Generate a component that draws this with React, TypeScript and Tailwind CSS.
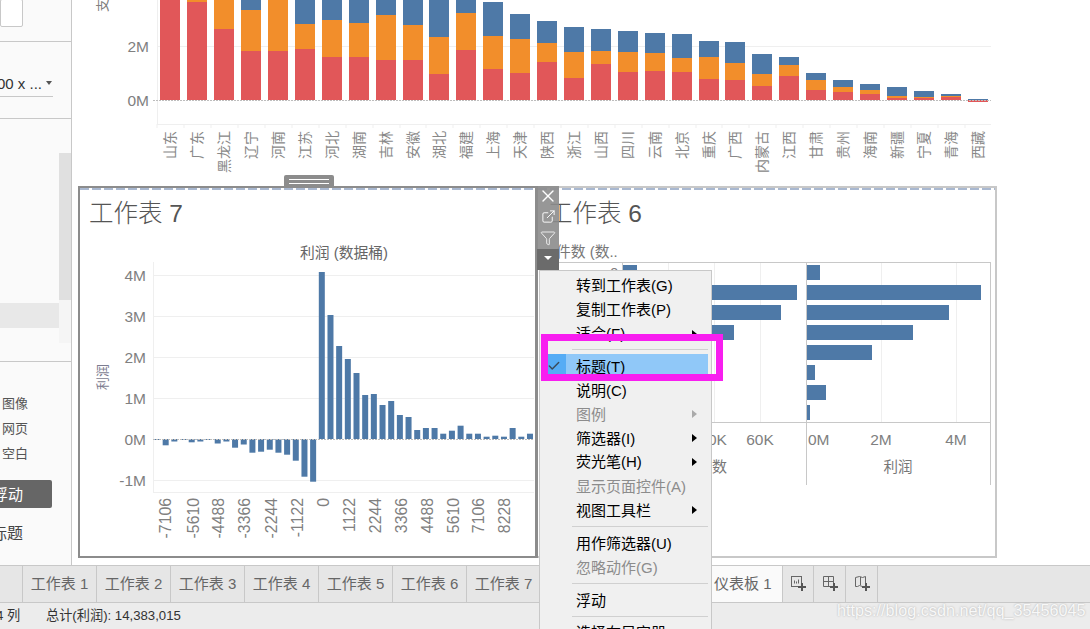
import { X, ExternalLink, Filter, Check } from "lucide-react";

// red top, orange top, blue top (page y, baseline is y=100)
const PROVINCES: [string, number, number, number, number][] = [
  ["山东", 160, -30, -60, -90],
  ["广东", 187, 2, -20, -60],
  ["黑龙江", 214, 29, -10, -50],
  ["辽宁", 241, 51, 10, -30],
  ["河南", 268, 51, -5, -30],
  ["江苏", 295, 49, 24, -20],
  ["河北", 322, 57, 20, -20],
  ["湖南", 349, 57, 23, 0],
  ["吉林", 376, 60, 15, -20],
  ["安徽", 403, 60, 25, -20],
  ["湖北", 429, 74, 37, -20],
  ["福建", 456, 50, 13, -20],
  ["上海", 483, 69, 36, 2],
  ["天津", 510, 73, 39, 14],
  ["陕西", 537, 62, 43, 21],
  ["浙江", 564, 78, 52, 27],
  ["山西", 591, 64, 51, 29],
  ["四川", 618, 72, 52, 31],
  ["云南", 645, 71, 53, 33],
  ["北京", 672, 72, 58, 34],
  ["重庆", 699, 79, 57, 41],
  ["广西", 725, 80, 63, 42],
  ["内蒙古", 752, 86, 74, 54],
  ["江西", 779, 76, 65, 57],
  ["甘肃", 806, 90, 80, 73],
  ["贵州", 833, 92, 87, 80],
  ["海南", 860, 94, 90, 84],
  ["新疆", 887, 98, 96, 87],
  ["宁夏", 914, 98, 97, 91],
  ["青海", 941, 97, 96, 94],
  ["西藏", 968, 100, 100, 99],
];

// bar ends relative to the 0M line, positive goes up
const BUCKETS = [
  -1, -6.3, -2.5, -1, -3.3, -2.5, -1, -4.5, -2.5, -8.7, -5.5, -13.7, -12.7, -10.7, -13.7, -15.7, -21.7, -37.7, -42.7,
  167, 124, 93, 80, 66, 44, 45, 34, 38, 24, 22, 9, 11, 11, 5.3, 8.3, 13.3, 5.3, 5.3, 2.3, 3.3, 2.3, 11, 2.3, 5.3,
];

const BUCKET_LABELS: [string, number][] = [
  ["-7106", 165], ["-5610", 193], ["-4488", 218], ["-3366", 244], ["-2244", 271], ["-1122", 297], ["0", 323],
  ["1122", 349], ["2244", 375], ["3366", 401], ["4488", 427], ["5610", 453], ["7106", 478], ["8228", 504],
];

const LEFT_BARS: [number, number][] = [[265, 637], [285, 797], [305, 781], [325, 734]];
const RIGHT_BARS: [number, number][] = [[265, 820], [285, 981], [305, 949], [325, 913], [345, 872], [365, 815], [385, 826], [405, 810]];

const TABS = ["工作表 1", "工作表 2", "工作表 3", "工作表 4", "工作表 5", "工作表 6", "工作表 7"];

type MenuRow = { label?: string; arrow?: boolean; off?: boolean; sepH?: number; sepAt?: number; on?: boolean; low?: boolean };

const MENU: MenuRow[] = [
  { label: "转到工作表(G)" },
  { label: "复制工作表(P)" },
  { label: "适合(F)", arrow: true },
  { sepH: 8, sepAt: 3 },
  { label: "标题(T)", on: true, low: true },
  { label: "说明(C)", low: true },
  { label: "图例", off: true, arrow: true, low: true },
  { label: "筛选器(I)", arrow: true, low: true },
  { label: "荧光笔(H)", arrow: true },
  { label: "显示页面控件(A)", off: true, low: true },
  { label: "视图工具栏", arrow: true, low: true },
  { sepH: 10, sepAt: 4 },
  { label: "用作筛选器(U)" },
  { label: "忽略动作(G)", off: true },
  { sepH: 9, sepAt: 3 },
  { label: "浮动" },
  { sepH: 8, sepAt: 3 },
  { label: "选择布局容器" },
];

function TopChart() {
  return (
    <svg width={1018} height={186} viewBox="72 0 1018 186" className="block shrink-0">
      <line x1={157} y1={46.5} x2={991} y2={46.5} stroke="#efefef" />
      <line x1={157.5} y1={0} x2={157.5} y2={124} stroke="#efefef" />
      <line x1={157} y1={124.5} x2={991} y2={124.5} stroke="#efefef" />
      <text x={149} y={51.5} textAnchor="end" fontSize={15.5} fill="#808080">2M</text>
      <text x={149} y={105.5} textAnchor="end" fontSize={15.5} fill="#808080">0M</text>
      <text transform="translate(107 12) rotate(-90)" fontSize={13} fill="#808080">支</text>
      {PROVINCES.map(([name, x, red, orange, blue]) => (
        <g key={name}>
          <rect x={x} y={blue} width={20} height={orange - blue} fill="#4e79a7" />
          <rect x={x} y={orange} width={20} height={red - orange} fill="#f28e2b" />
          <rect x={x} y={red} width={20} height={Math.max(100 - red, 2)} fill="#e15759" />
          <line x1={x - 3} y1={124} x2={x - 3} y2={128} stroke="#efefef" />
          <text transform={`translate(${x + 14.5} 131) rotate(-90)`} textAnchor="end" fontSize={14} fill="#888">{name}</text>
        </g>
      ))}
      <line x1={153} y1={100.5} x2={991} y2={100.5} stroke="#bdbdbd" strokeDasharray="2 1" />
    </svg>
  );
}

function Sheet7Chart() {
  return (
    <svg width={456} height={320} viewBox="80 236 456 320" className="block">
      <text x={344} y={258} textAnchor="middle" fontSize={14.8} fill="#666">利润 (数据桶)</text>
      <line x1={153.5} y1={262} x2={153.5} y2={492} stroke="#efefef" />
      <line x1={153} y1={492.5} x2={534} y2={492.5} stroke="#efefef" />
      {[["4M", 275], ["3M", 316], ["2M", 357], ["1M", 398], ["-1M", 480]].map(([t, y]) => (
        <g key={t}>
          <line x1={153} y1={Number(y) + 0.5} x2={534} y2={Number(y) + 0.5} stroke="#efefef" />
          <text x={146} y={Number(y) + 6} textAnchor="end" fontSize={15.5} fill="#808080">{t}</text>
        </g>
      ))}
      <text x={146} y={445} textAnchor="end" fontSize={15.5} fill="#808080">0M</text>
      <text transform="translate(107 390) rotate(-90)" fontSize={13} fill="#7c7c90">利润</text>
      {BUCKETS.map((v, i) => (
        <rect key={i} x={154 + i * 8.674} y={v > 0 ? 439 - v : 439} width={6} height={Math.abs(v)} fill="#4e79a7" />
      ))}
      <line x1={153} y1={439.5} x2={534} y2={439.5} stroke="#bdbdbd" strokeDasharray="2 1" />
      {BUCKET_LABELS.map(([t, x]) => (
        <text key={t} transform={`translate(${x + 5.5} 498) rotate(-90)`} textAnchor="end" fontSize={15.8} fill="#808080">{t}</text>
      ))}
    </svg>
  );
}

function Sheet6Chart() {
  return (
    <svg width={457} height={320} viewBox="538 236 457 320" className="block">
      <text x={556} y={257} fontSize={14.8} fill="#777">件数 (数..</text>
      <text x={610} y={278} fontSize={15} fill="#808080">0</text>
      {[668.5, 714.5, 760.5, 881.5, 956.5].map((x) => (
        <line key={x} x1={x} y1={262} x2={x} y2={422} stroke="#efefef" />
      ))}
      {LEFT_BARS.map(([y, end]) => (
        <rect key={y} x={622} y={y} width={end - 622} height={15} fill="#4e79a7" />
      ))}
      {RIGHT_BARS.map(([y, end]) => (
        <rect key={y} x={807} y={y} width={end - 807} height={15} fill="#4e79a7" />
      ))}
      <line x1={558} y1={262.5} x2={990} y2={262.5} stroke="#c8c8c8" />
      <line x1={622} y1={422.5} x2={990} y2={422.5} stroke="#c8c8c8" />
      <line x1={622.5} y1={262} x2={622.5} y2={422} stroke="#c8c8c8" />
      <line x1={806.5} y1={262} x2={806.5} y2={485} stroke="#c8c8c8" />
      <line x1={990.5} y1={262} x2={990.5} y2={485} stroke="#c8c8c8" />
      <text x={708} y={444.5} fontSize={15.5} fill="#808080">0K</text>
      <text x={760} y={444.5} textAnchor="middle" fontSize={15.5} fill="#808080">60K</text>
      <text x={808} y={444.5} fontSize={15.5} fill="#808080">0M</text>
      <text x={881} y={444.5} textAnchor="middle" fontSize={15.5} fill="#808080">2M</text>
      <text x={956} y={444.5} textAnchor="middle" fontSize={15.5} fill="#808080">4M</text>
      <text x={697} y={472} fontSize={15} fill="#777">件数</text>
      <text x={898} y={472} textAnchor="middle" fontSize={14.5} fill="#777">利润</text>
    </svg>
  );
}

function Sidebar() {
  return (
    <div className="w-[72px] h-full shrink-0 bg-[#fafafa] border-r border-[#c8c8c8] flex flex-col overflow-hidden">
      <div className="h-[42px] shrink-0 border-b border-[#c8c8c8]">
        <div className="w-[23px] h-[28px] -mt-px bg-white border border-[#c8c8c8] rounded-[2px]" />
      </div>
      <div className="h-[77px] shrink-0 border-b border-[#c8c8c8] pt-[31px]">
        <div className="w-[53px] h-[24px] border-b border-[#c8c8c8] flex items-center justify-between pr-px">
          <span className="text-[15px] leading-none text-[#333] -ml-[3px] -mt-[2px] whitespace-nowrap">00 x ...</span>
          <span className="w-0 h-0 border-x-[3.5px] border-x-transparent border-t-[4px] border-t-[#555] mb-[3px]" />
        </div>
      </div>
      <div className="h-[243px] shrink-0 border-b border-[#c8c8c8] flex justify-end relative">
        <div className="absolute left-0 top-[184px] w-[59px] h-[25px] bg-[#e8e8e8]" />
        <div className="w-[12px] pt-[34px] mr-0">
          <div className="h-[147px] bg-[#e0e0e0]" />
          <div className="h-[43px] bg-[#f5f5f5]" />
        </div>
      </div>
      <div className="pt-[29px] pl-[2px] text-[13px] leading-[25px] text-[#555]">
        <p>图像</p>
        <p>网页</p>
        <p>空白</p>
      </div>
      <div className="mt-[14px] w-[52px] h-[28px] bg-[#666] rounded-r-[2px] text-white text-[15px] leading-[29px] overflow-hidden whitespace-nowrap">
        <span className="block -ml-[7px]">浮动</span>
      </div>
      <p className="mt-[15px] -ml-[9px] text-[16px] leading-[22px] text-[#444] whitespace-nowrap">标题</p>
    </div>
  );
}

function Card7() {
  return (
    <div className="w-[460px] h-[372px] shrink-0 border-2 border-r-[3px] border-[#8c8c8c] bg-white">
      <div className="h-[2px] bg-[repeating-linear-gradient(90deg,#a9b8d0_0_9px,transparent_9px_12px)]" />
      <p className="h-[46px] pl-[9px] pt-[7px] text-[24.5px] leading-[34px] font-light text-[#555]">工作表 7</p>
      <Sheet7Chart />
    </div>
  );
}

function Card6() {
  return (
    <div className="w-[459px] h-[372px] shrink-0 border-2 border-l-0 border-[#c8c8c8] bg-white">
      <div className="h-[2px] bg-[repeating-linear-gradient(90deg,#a9b8d0_0_9px,transparent_9px_12px)]" />
      <p className="h-[46px] pl-[10px] pt-[7px] text-[24.5px] leading-[34px] font-light text-[#555]">工作表 6</p>
      <Sheet6Chart />
    </div>
  );
}

function TabIcon({ kind }: { kind: "sheet" | "board" | "story" }) {
  return (
    <svg width={18} height={18} viewBox="0 0 18 18" fill="none" stroke="#666">
      {kind === "sheet" && (
        <>
          <rect x={1.5} y={1.5} width={10} height={10} />
          <path d="M4.5 8.5v-3M6.5 8.5v-2M8.5 8.5v-4" />
        </>
      )}
      {kind === "board" && <path d="M1.5 1.5h10v10h-10zM1.5 6.5h10M6.5 1.5v10" />}
      {kind === "story" && <path d="M1.5 2.5l4 -1 3 1 3 -1v10h-3l-3 -1 -2 1h-2zM6.5 2v8" />}
      <path d="M12 8v8M8 12h8" stroke="#555" strokeWidth={2} />
    </svg>
  );
}

function TabBar() {
  return (
    <div className="h-[38px] shrink-0 flex bg-[#e6e6e6] border-y border-[#c8c8c8] text-[15px] text-[#666]">
      <div className="w-[23px] border-r border-[#c8c8c8]" />
      {TABS.map((t) => (
        <div key={t} className="w-[74px] border-r border-[#c8c8c8] flex items-center justify-center whitespace-nowrap">{t}</div>
      ))}
      <div className="w-[171px]" />
      <div className="w-[70px] bg-[#fafafa] flex items-center pl-[2px] whitespace-nowrap">仪表板 1</div>
      <div className="w-[32px] border-x border-[#c8c8c8] flex items-center justify-center pl-[2px]"><TabIcon kind="sheet" /></div>
      <div className="w-[32px] border-r border-[#c8c8c8] flex items-center justify-center pl-[2px]"><TabIcon kind="board" /></div>
      <div className="w-[32px] border-r border-[#c8c8c8] flex items-center justify-center pl-[2px]"><TabIcon kind="story" /></div>
    </div>
  );
}

function StatusBar() {
  return (
    <div className="flex-1 bg-[#ececec] flex items-center text-[13.2px] text-[#333] whitespace-nowrap">
      <span className="-ml-[4px] w-[50px]">4 列</span>
      <span>总计(利润): 14,383,015</span>
    </div>
  );
}

function ContextMenu() {
  return (
    <div className="absolute left-[539px] top-[270px] w-[173px] h-[359px] bg-[#f0f0f0] border border-[#c8c8c8] border-b-0 pt-[3px] overflow-hidden text-[15px] text-black">
      {MENU.map((row, i) =>
        row.label ? (
          <div key={i} className={`relative h-[24px] shrink-0 flex items-center justify-between pl-[36px] pr-[14px] whitespace-nowrap ${row.off ? "text-[#8c8c8c]" : ""}`}>
            {row.on && (
              <div className="absolute left-[4px] right-[3px] top-0 h-full flex">
                <div className="w-[22px] bg-[#55acf5] flex items-center justify-center pr-[2px]"><Check size={14} strokeWidth={2.5} color="#3a4a5a" /></div>
                <div className="flex-1 bg-[#90c8f8]" />
              </div>
            )}
            <span className={row.low ? "relative top-px" : "relative"}>{row.label}</span>
            {row.arrow && (
              <span className={`w-0 h-0 border-y-[4px] border-y-transparent border-l-[5px] ${row.off ? "border-l-[#aaa]" : "border-l-black"}`} />
            )}
          </div>
        ) : (
          <div key={i} className="relative" style={{ height: row.sepH }}>
            <div className="absolute left-[32px] right-[3px] h-px bg-[#d0d0d0]" style={{ top: row.sepAt }} />
          </div>
        ),
      )}
    </div>
  );
}

export default function App() {
  return (
    <div className="relative w-[1090px] h-[629px] overflow-hidden bg-white flex flex-col [font-family:'Liberation_Sans','Noto_Sans_CJK_SC',sans-serif]">
      <div className="h-[565px] shrink-0 flex">
        <Sidebar />
        <div className="flex-1 flex flex-col">
          <TopChart />
          <div className="flex pl-[6px]">
            <Card7 />
            <Card6 />
          </div>
        </div>
      </div>
      <TabBar />
      <StatusBar />

      {/* drag handle on the selected sheet */}
      <div className="absolute left-[284px] top-[175px] w-[50px] h-[12px] bg-[#8c8c8c] rounded-t-[2px] flex flex-col items-center justify-center gap-[3px]">
        <div className="w-[40px] h-px bg-white" />
        <div className="w-[40px] h-px bg-white" />
      </div>

      {/* floating sheet toolbar */}
      <div className="absolute left-[537px] top-[186px] w-[22px] h-[84px] flex flex-col text-white">
        <div className="h-[63px] bg-[#8c8c8c]/90 flex flex-col items-center">
          <X size={20} strokeWidth={1.6} />
          <ExternalLink size={15} strokeWidth={1.5} className="mt-[3px]" />
          <Filter size={16} strokeWidth={1.2} className="mt-[6px]" />
        </div>
        <div className="flex-1 bg-[#6b6b6b] flex items-center justify-center pb-[4px]">
          <span className="w-0 h-0 border-x-[4px] border-x-transparent border-t-[4px] border-t-white" />
        </div>
      </div>

      <ContextMenu />

      {/* magenta annotation box */}
      <div className="absolute left-[541px] top-[334px] w-[182px] h-[47px] border-[7px] border-[#f81ef0]" />

      <span className="absolute left-[837px] top-[600px] text-[16.2px] leading-[20px] text-[#f8f8f8] [text-shadow:0_0_2px_#aaa] whitespace-nowrap">https://blog.csdn.net/qq_35456045</span>
    </div>
  );
}
